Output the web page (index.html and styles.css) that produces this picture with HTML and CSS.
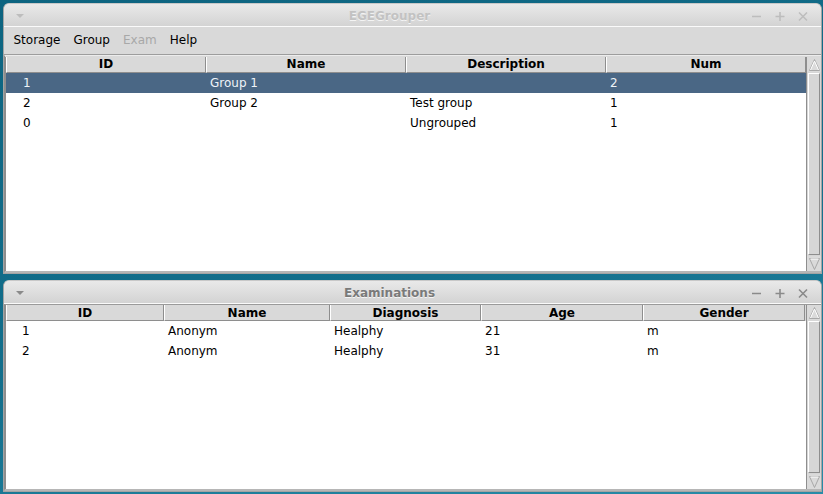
FILE: index.html
```html
<!DOCTYPE html>
<html>
<head>
<meta charset="utf-8">
<link rel="stylesheet" href="styles.css">
</head>
<body>
<div class="desktop">
  <div class="window win-main">
    <div class="titlebar inactive">
      <div class="tb-left"><svg width="10" height="6" viewBox="0 0 10 6"><path d="M1 1 L9 1 L5 5 Z" fill="currentColor"/></svg></div>
      <div class="tb-title">EGEGrouper</div>
      <div class="tb-buttons">
        <svg width="12" height="12" viewBox="0 0 12 12"><path d="M1 6.5 H10" stroke="currentColor" stroke-width="1.6"/></svg>
        <svg width="12" height="12" viewBox="0 0 12 12"><path d="M1.5 6.5 H10.5 M6 2 V11" stroke="currentColor" stroke-width="1.6"/></svg>
        <svg width="12" height="12" viewBox="0 0 12 12"><path d="M2 2.5 L10 10.5 M10 2.5 L2 10.5" stroke="currentColor" stroke-width="1.6"/></svg>
      </div>
    </div>
    <div class="menubar">
      <span class="menu-item">Storage</span>
      <span class="menu-item">Group</span>
      <span class="menu-item disabled">Exam</span>
      <span class="menu-item">Help</span>
    </div>
    <div class="frame">
      <div class="table t-groups">
        <div class="row header">
          <div class="cell">ID</div><div class="cell">Name</div><div class="cell">Description</div><div class="cell">Num</div>
        </div>
        <div class="row selected">
          <div class="cell first">1</div><div class="cell">Group 1</div><div class="cell"></div><div class="cell">2</div>
        </div>
        <div class="row">
          <div class="cell first">2</div><div class="cell">Group 2</div><div class="cell">Test group</div><div class="cell">1</div>
        </div>
        <div class="row">
          <div class="cell first">0</div><div class="cell"></div><div class="cell">Ungrouped</div><div class="cell">1</div>
        </div>
      </div>
      <div class="scrollbar">
        <div class="sb-btn"><svg width="13" height="14" viewBox="0 0 13 14"><path d="M1.5 12.5 L6.5 1.5 L11.5 12.5 Z" fill="none" stroke="#a8a8a8"/><path d="M2.5 12 L6.5 3 L10.5 12" fill="none" stroke="#fff"/></svg></div>
        <div class="sb-trough"><div class="sb-thumb"></div></div>
        <div class="sb-btn"><svg width="13" height="14" viewBox="0 0 13 14"><path d="M1.5 1.5 L6.5 12.5 L11.5 1.5 Z" fill="none" stroke="#a8a8a8"/><path d="M2.5 2 H10.5" fill="none" stroke="#fff"/></svg></div>
      </div>
    </div>
  </div>

  <div class="window win-exams">
    <div class="titlebar">
      <div class="tb-left"><svg width="10" height="6" viewBox="0 0 10 6"><path d="M1 1 L9 1 L5 5 Z" fill="currentColor"/></svg></div>
      <div class="tb-title">Examinations</div>
      <div class="tb-buttons">
        <svg width="12" height="12" viewBox="0 0 12 12"><path d="M1 6.5 H10" stroke="currentColor" stroke-width="1.6"/></svg>
        <svg width="12" height="12" viewBox="0 0 12 12"><path d="M1.5 6.5 H10.5 M6 2 V11" stroke="currentColor" stroke-width="1.6"/></svg>
        <svg width="12" height="12" viewBox="0 0 12 12"><path d="M2 2.5 L10 10.5 M10 2.5 L2 10.5" stroke="currentColor" stroke-width="1.6"/></svg>
      </div>
    </div>
    <div class="frame">
      <div class="table t-exams">
        <div class="row header">
          <div class="cell">ID</div><div class="cell">Name</div><div class="cell">Diagnosis</div><div class="cell">Age</div><div class="cell">Gender</div>
        </div>
        <div class="row">
          <div class="cell first">1</div><div class="cell">Anonym</div><div class="cell">Healphy</div><div class="cell">21</div><div class="cell">m</div>
        </div>
        <div class="row">
          <div class="cell first">2</div><div class="cell">Anonym</div><div class="cell">Healphy</div><div class="cell">31</div><div class="cell">m</div>
        </div>
      </div>
      <div class="scrollbar">
        <div class="sb-btn"><svg width="13" height="14" viewBox="0 0 13 14"><path d="M1.5 12.5 L6.5 1.5 L11.5 12.5 Z" fill="none" stroke="#a8a8a8"/><path d="M2.5 12 L6.5 3 L10.5 12" fill="none" stroke="#fff"/></svg></div>
        <div class="sb-trough"><div class="sb-thumb"></div></div>
        <div class="sb-btn"><svg width="13" height="14" viewBox="0 0 13 14"><path d="M1.5 1.5 L6.5 12.5 L11.5 1.5 Z" fill="none" stroke="#a8a8a8"/><path d="M2.5 2 H10.5" fill="none" stroke="#fff"/></svg></div>
      </div>
    </div>
  </div>
</div>
</body>
</html>
```

FILE: styles.css
```css
* { box-sizing: border-box; }
html, body { margin: 0; padding: 0; }
body {
  width: 823px;
  height: 494px;
  overflow: hidden;
  background: linear-gradient(165deg, #0d6480 0%, #136f8c 55%, #2a8ca8 100%);
  font-family: "DejaVu Sans", "Liberation Sans", sans-serif;
  font-size: 12px;
  color: #000;
}
.desktop {
  display: flex;
  flex-direction: column;
  gap: 6px;
  padding: 3px 0 0 3px;
}
.window {
  width: 819px;
  background: #d9d9d9;
  border: 1px solid #a4a4a4;
  border-top-color: #c8c8c8;
  border-radius: 6px 6px 0 0;
  display: flex;
  flex-direction: column;
  overflow: hidden;
}
.win-main { height: 271px; }
.win-exams { height: 212px; }

.titlebar {
  height: 23px;
  flex: none;
  display: flex;
  align-items: center;
  background: linear-gradient(#e9e9e9, #d3d3d3);
  border-bottom: 1px solid #fafafa;
  color: #8a8a8a;
}
.titlebar.inactive { color: #bdbdbd; }
.tb-left {
  width: 27px;
  display: flex;
  justify-content: flex-end;
  padding-right: 6px;
  padding-top: 1px;
}
.tb-left svg { display: block; }
.tb-title {
  flex: 1;
  text-align: center;
  font-weight: bold;
  font-size: 12px;
  text-shadow: 0 1px 0 #f4f4f4;
  padding-top: 1px;
  padding-right: 2px;
}
.titlebar .tb-title { color: #7a7a7a; }
.titlebar.inactive .tb-title { color: #c2c2c2; }
.tb-buttons {
  width: 71px;
  display: flex;
  gap: 11px;
  padding-left: 1px;
  padding-top: 1px;
}
.tb-buttons svg { display: block; }

.menubar {
  height: 28px;
  flex: none;
  display: flex;
  align-items: center;
  padding-left: 3px;
  padding-bottom: 2px;
  background: #d9d9d9;
  border-bottom: 1px solid #9d9d9d;
}
.menu-item {
  padding: 0 6.5px;
  line-height: 16px;
  font-size: 12px;
}
.menu-item.disabled { color: #a8a8a8; }

.frame {
  flex: 1;
  display: flex;
  border-top: 1px solid #ececec;
  border-left: 1px solid #8e8e8e;
  min-height: 0;
  border-bottom: 2px solid #b6b6b6;
}
.win-main .frame { padding-top: 1px; }
.win-exams .frame { border-top: 1px solid #9a9a9a; }
.table {
  flex: 1;
  background: #fff;
  display: flex;
  flex-direction: column;
  border-left: 1px solid #8e8e8e;
}
.row {
  display: grid;
  height: 20px;
  align-items: center;
  flex: none;
}
.t-groups .row { grid-template-columns: 200px 200px 200px 200px; }
.t-exams .row { grid-template-columns: 158px 166px 151px 162px 162px; }
.row.header {
  height: 16px;
  background: #d9d9d9;
  align-items: stretch;
}
.header .cell {
  font-weight: bold;
  text-align: center;
  line-height: 14px;
  border-left: 1px solid #fff;
  border-right: 1px solid #8e8e8e;
  border-bottom: 1px solid #8e8e8e;
  padding: 0;
}
.t-exams .header .cell { padding-top: 1px; line-height: 14px; }
.cell {
  padding-left: 4px;
  white-space: nowrap;
  overflow: hidden;
}
.cell.first { padding-left: 17px; }
.t-exams .cell.first { padding-left: 16px; }
.row.selected {
  background: #4a6785;
  color: #eef3f8;
}

.scrollbar {
  width: 15px;
  flex: none;
  display: flex;
  flex-direction: column;
  background: #d6d6d6;
  border-left: 1px solid #8e8e8e;
}
.sb-btn {
  height: 15px;
  flex: none;
  display: flex;
  justify-content: center;
  align-items: center;
  background: #dadada;
}
.sb-btn svg { display: block; }
.sb-trough {
  flex: 1;
  padding: 1px 1px;
  display: flex;
}
.sb-thumb {
  flex: 1;
  background: #d6d6d6;
  border-top: 1px solid #fff;
  border-left: 1px solid #fff;
  border-right: 1px solid #8e8e8e;
  border-bottom: 1px solid #8e8e8e;
}
```
